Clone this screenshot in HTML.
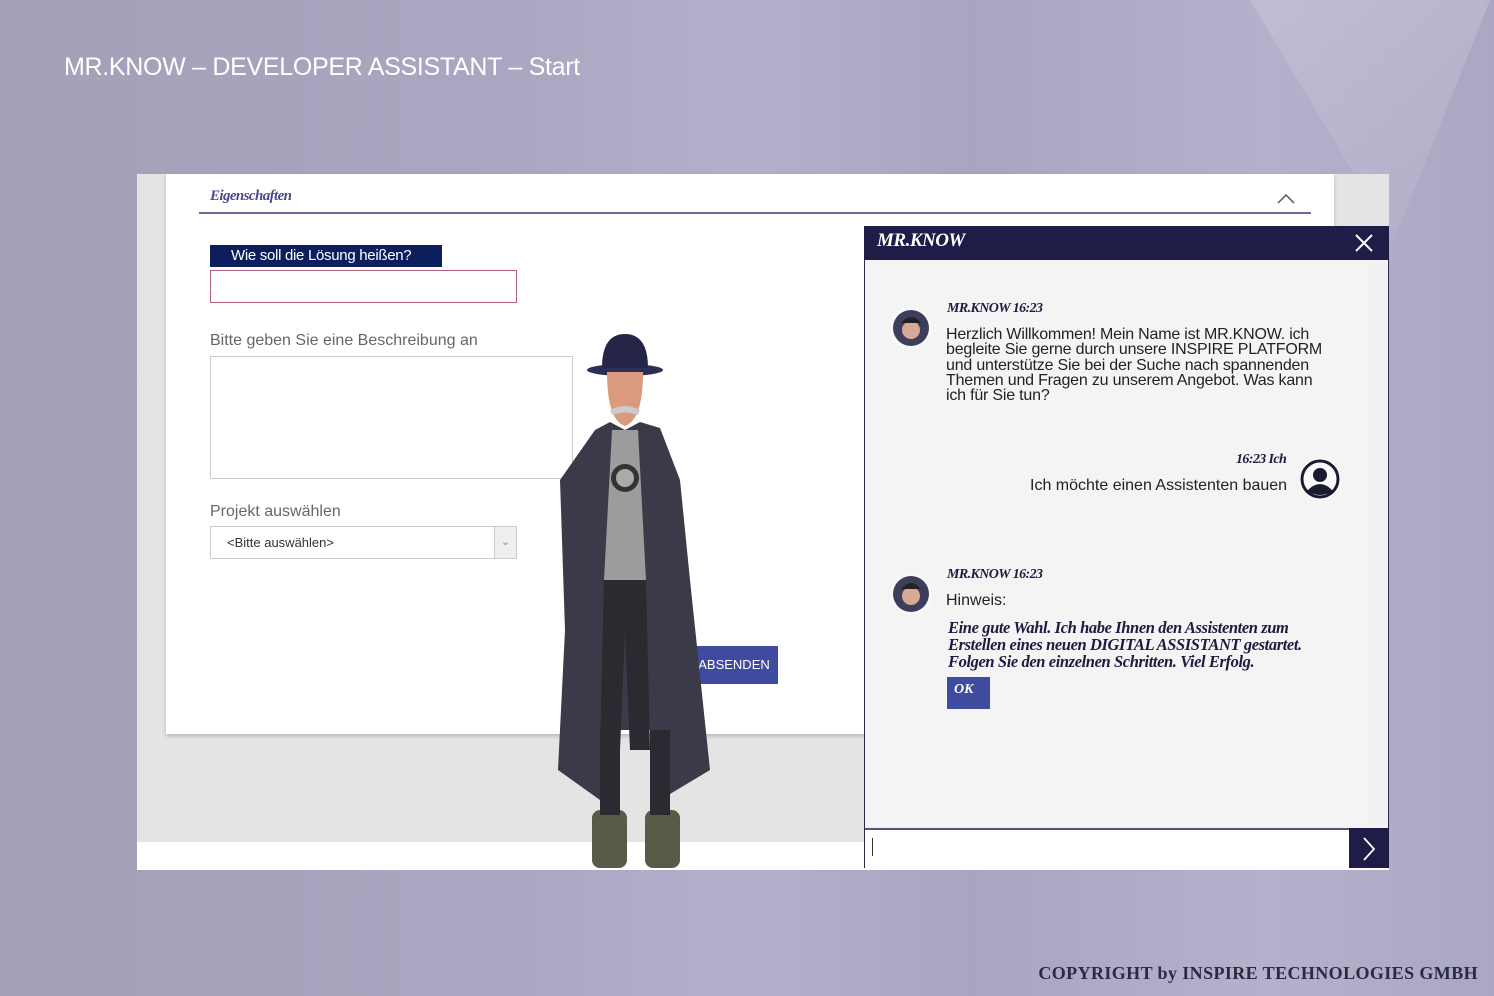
<!DOCTYPE html>
<html><head><meta charset="utf-8"><style>
body{margin:0;width:1494px;height:996px;overflow:hidden;position:relative;font-family:"Liberation Sans",sans-serif;
background:linear-gradient(90deg,#a3a1b7 0%,#a9a7c2 35%,#b3b0cc 50%,#a8a5c0 65%,#b5b1cc 85%,#aaa7c2 100%);}
.abs{position:absolute}
</style></head><body>
<div class="abs" style="left:1250px;top:0;width:240px;height:240px;background:linear-gradient(160deg,#c9c3d8,#b7b2cc);clip-path:polygon(0 0,100% 0,60% 100%);opacity:.6"></div>
<div class="abs" style="left:64px;top:53px;color:#fff;font-size:25px;letter-spacing:-0.3px">MR.KNOW – DEVELOPER ASSISTANT – Start</div>

<div class="abs" style="left:137px;top:174px;width:1252px;height:696px;background:#e4e4e4"></div>
<div class="abs" style="left:137px;top:842px;width:1252px;height:28px;background:#fff"></div>
<div class="abs" style="left:166px;top:174px;width:1168px;height:560px;background:#fff;box-shadow:0 2px 4px rgba(0,0,0,.2)"></div>
<div class="abs" style="left:210px;top:188px;font-family:'Liberation Serif',serif;font-style:italic;font-weight:bold;font-size:15px;color:#4a4a8a;letter-spacing:-.6px">Eigenschaften</div>
<div class="abs" style="left:199px;top:212px;width:1112px;height:2px;background:#6a6a9a"></div>
<svg class="abs" style="left:1276px;top:193px" width="20" height="12"><path d="M2 10 L10 2 L18 10" stroke="#555" stroke-width="1.5" fill="none"/></svg>
<div class="abs" style="left:210px;top:245px;width:232px;height:22px;background:#0c1f5c;color:#fff;font-size:15px;line-height:22px;text-indent:21px;letter-spacing:-.3px">Wie soll die Lösung heißen?</div>
<div class="abs" style="left:210px;top:270px;width:305px;height:31px;border:1px solid #b06080"></div>
<div class="abs" style="left:210px;top:332px;font-size:16px;color:#666">Bitte geben Sie eine Beschreibung an</div>
<div class="abs" style="left:210px;top:356px;width:361px;height:121px;border:1px solid #ccc"></div>
<div class="abs" style="left:210px;top:503px;font-size:16px;color:#666">Projekt auswählen</div>
<div class="abs" style="left:210px;top:526px;width:305px;height:31px;border:1px solid #ccc"></div>
<div class="abs" style="left:494px;top:527px;width:21px;height:31px;background:#eee;border-left:1px solid #ccc;color:#888;font-size:11px;text-align:center;line-height:30px">⌄</div>
<div class="abs" style="left:227px;top:535px;font-size:13px;color:#333">&lt;Bitte auswählen&gt;</div>
<div class="abs" style="left:690px;top:646px;width:88px;height:38px;background:#3f4b9e;color:#fff;font-size:13px;line-height:38px;text-align:center">ABSENDEN</div>

<svg class="abs" style="left:550px;top:330px" width="170" height="540">
<ellipse cx="75" cy="40" rx="38" ry="6" fill="#2d2d55"/>
<path d="M52 38 Q52 4 75 4 Q98 4 98 38Z" fill="#252548"/>
<path d="M57 42 Q57 90 75 96 Q93 90 93 42Z" fill="#d99a7e"/>
<path d="M60 80 Q75 72 90 80 L88 85 Q75 80 62 85Z" fill="#ccc"/>
<path d="M45 100 L60 92 L75 100 L90 92 L110 98 L130 150 L140 250 L160 440 L110 470 L100 400 L60 400 L50 470 L8 440 L15 300 L10 150 Z" fill="#3a3a48"/>
<path d="M62 100 L88 100 L96 250 L54 250 Z" fill="#9c9c9c"/>
<circle cx="75" cy="148" r="14" fill="#333"/><circle cx="75" cy="148" r="9" fill="#aaa"/>
<path d="M54 250 L96 250 L100 420 L80 420 L75 300 L70 420 L50 420Z" fill="#2a2a30"/>
<rect x="42" y="480" width="35" height="58" rx="8" fill="#5a5a48"/>
<rect x="95" y="480" width="35" height="58" rx="8" fill="#5a5a48"/>
<rect x="50" y="400" width="20" height="85" fill="#2a2a30"/>
<rect x="100" y="400" width="20" height="85" fill="#2a2a30"/>
</svg>

<div class="abs" style="left:864px;top:226px;width:523px;height:640px;background:#f4f4f5;border:1px solid #2a2850"></div>
<div class="abs" style="left:864px;top:226px;width:525px;height:34px;background:#1f1c48"></div>
<div class="abs" style="left:877px;top:230px;color:#fff;font-family:'Liberation Serif',serif;font-style:italic;font-size:19px;font-weight:bold;letter-spacing:-.5px">MR.KNOW</div>
<svg class="abs" style="left:1354px;top:233px" width="20" height="20"><path d="M2 2L18 18M18 2L2 18" stroke="#fff" stroke-width="2"/></svg>
<div class="abs" style="left:1368px;top:262px;width:18px;height:562px;background:#f0f0f0"></div>

<svg class="abs" style="left:889px;top:306px" width="44" height="44"><circle cx="22" cy="22" r="21" fill="#f8f8f8"/><circle cx="22" cy="22" r="18" fill="#3d3d5c"/><circle cx="22" cy="24" r="9" fill="#d8aa96"/><path d="M12 17 Q22 5 32 17Z" fill="#222"/></svg>
<div class="abs" style="left:947px;top:301px;font-family:'Liberation Serif',serif;font-style:italic;font-weight:bold;font-size:14px;color:#1c1c40;letter-spacing:-.6px">MR.KNOW 16:23</div>
<div class="abs" style="left:946px;top:327px;width:390px;font-size:16px;line-height:15.3px;color:#222;letter-spacing:-.2px">Herzlich Willkommen! Mein Name ist MR.KNOW. ich begleite Sie gerne durch unsere INSPIRE PLATFORM und unterstütze Sie bei der Suche nach spannenden Themen und Fragen zu unserem Angebot. Was kann ich für Sie tun?</div>

<div class="abs" style="left:1236px;top:452px;font-family:'Liberation Serif',serif;font-style:italic;font-weight:bold;font-size:14px;color:#1c1c40;letter-spacing:-.6px">16:23 Ich</div>
<div class="abs" style="left:1030px;top:477px;font-size:16px;color:#222">Ich möchte einen Assistenten bauen</div>
<svg class="abs" style="left:1298px;top:457px" width="44" height="44"><circle cx="22" cy="22" r="21" fill="#fafafa"/><circle cx="22" cy="22" r="18" fill="none" stroke="#1a1a30" stroke-width="3"/><circle cx="22" cy="18" r="7" fill="#1a1a30"/><path d="M9 34 Q22 20 35 34 Q22 42 9 34Z" fill="#1a1a30"/></svg>

<svg class="abs" style="left:889px;top:572px" width="44" height="44"><circle cx="22" cy="22" r="21" fill="#f8f8f8"/><circle cx="22" cy="22" r="18" fill="#3d3d5c"/><circle cx="22" cy="24" r="9" fill="#d8aa96"/><path d="M12 17 Q22 5 32 17Z" fill="#222"/></svg>
<div class="abs" style="left:947px;top:567px;font-family:'Liberation Serif',serif;font-style:italic;font-weight:bold;font-size:14px;color:#1c1c40;letter-spacing:-.6px">MR.KNOW 16:23</div>
<div class="abs" style="left:946px;top:592px;font-size:16px;color:#222">Hinweis:</div>
<div class="abs" style="left:948px;top:619px;width:380px;font-family:'Liberation Serif',serif;font-style:italic;font-weight:bold;font-size:16.5px;line-height:17px;color:#1c1c40;letter-spacing:-.4px">Eine gute Wahl. Ich habe Ihnen den Assistenten zum Erstellen eines neuen DIGITAL ASSISTANT gestartet. Folgen Sie den einzelnen Schritten. Viel Erfolg.</div>
<div class="abs" style="left:947px;top:677px;width:43px;height:32px;background:#3f4b9e;color:#fff;font-family:'Liberation Serif',serif;font-style:italic;font-weight:bold;font-size:14px;text-indent:7px;line-height:26px">OK</div>

<div class="abs" style="left:865px;top:828px;width:484px;height:38px;background:#fff;border-top:2px solid #55536e"></div>
<div class="abs" style="left:872px;top:838px;width:1px;height:18px;background:#333"></div>
<div class="abs" style="left:1349px;top:828px;width:40px;height:40px;background:#1f1c48"></div>
<svg class="abs" style="left:1362px;top:836px" width="14" height="26"><path d="M2 2L12 13L2 24" stroke="#fff" stroke-width="1.8" fill="none"/></svg>

<div class="abs" style="right:16px;top:963px;font-family:'Liberation Serif',serif;font-weight:bold;font-size:18px;color:#2a2a40;letter-spacing:.4px">COPYRIGHT by INSPIRE TECHNOLOGIES GMBH</div>
</body></html>
